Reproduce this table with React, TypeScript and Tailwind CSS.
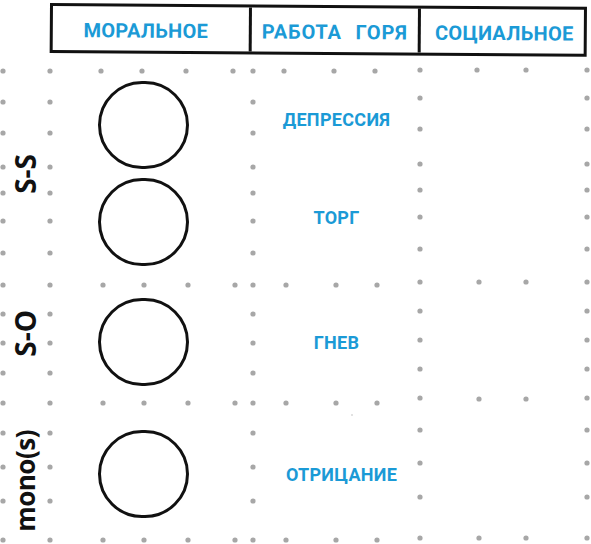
import React from "react";

const leftRows = [71, 102, 133, 167, 193, 221, 253, 285, 314, 343, 373, 403, 433, 467, 501, 540];
const rightRows = [70, 98, 129, 164, 190, 217, 249, 282, 311, 340, 369, 398, 430, 463, 497, 538];

// rows where the dots run all the way across
const fullRows: { y: number; yr: number; xs: number[] }[] = [
  { y: 71, yr: 70, xs: [101, 142, 186, 233, 284, 334, 375, 477, 526] },
  { y: 285, yr: 282, xs: [103, 144, 188, 235, 286, 336, 377, 479, 526] },
  { y: 403, yr: 399, xs: [103, 144, 188, 235, 286, 336, 377, 479, 526] },
  { y: 540, yr: 538, xs: [103, 144, 188, 235, 286, 336, 377, 479, 526] },
];

function Dots() {
  const dots: [number, number][] = [];
  leftRows.forEach((y) => [3, 50, 253].forEach((x) => dots.push([x, y])));
  rightRows.forEach((y) => [420, 587].forEach((x) => dots.push([x, y])));
  fullRows.forEach((r) => r.xs.forEach((x) => dots.push([x, x > 400 ? r.yr : r.y])));

  return (
    <svg className="absolute inset-0 pointer-events-none" width={591} height={544}>
      {dots.map(([x, y], i) => (
        <circle key={i} cx={x} cy={y} r={2.6} fill="#a7a7a7" />
      ))}
      <circle cx={352} cy={415} r={0.8} fill="#bdbdbd" />
    </svg>
  );
}

function Circle({ ml = "ml-[48px]" }: { ml?: string }) {
  return <div className={`${ml} w-[91px] h-[88px] rounded-full border-[3px] border-[#111]`} />;
}

function Label({ children, className = "" }: { children: React.ReactNode; className?: string }) {
  return (
    <div
      className={`w-[50px] flex items-center justify-center font-['Open_Sans',sans-serif] font-bold leading-none text-[#111] ${className}`}
    >
      <span className="[writing-mode:vertical-rl] rotate-180">{children}</span>
    </div>
  );
}

function Stage({ text, textClass = "" }: { text: string; textClass?: string }) {
  return (
    <div className="flex items-center h-[88px]">
      <div className="w-[203px] flex">
        <Circle />
      </div>
      <div
        className={`w-[167px] text-center font-['Roboto',sans-serif] font-bold text-[18px] tracking-[0.3px] text-[#1b9ad6] ${textClass}`}
      >
        {text}
      </div>
    </div>
  );
}

export default function App() {
  return (
    <div className="relative w-[591px] h-[544px] bg-white overflow-hidden">
      <Dots />

      {/* header table */}
      <div className="relative ml-[50px] mt-[3px] w-[537px] h-[50px] flex border-[3px] border-[#111] rotate-[0.4deg] origin-top-left font-['Roboto',sans-serif] font-bold text-[20px] text-[#1b9ad6] tracking-[0.3px]">
        <div className="w-[199px] border-r-[3px] border-[#111] flex items-center justify-center pt-[4px] pr-[10px]">
          МОРАЛЬНОЕ
        </div>
        <div className="w-[169px] border-r-[3px] border-[#111] flex items-center justify-center pt-[4px] tracking-[0.8px] [word-spacing:8px]">
          РАБОТА ГОРЯ
        </div>
        <div className="flex-1 flex items-center justify-center pt-[4px] pl-[4px]">СОЦИАЛЬНОЕ</div>
      </div>

      <div className="relative mt-[28px] flex flex-col">
        {/* S-S */}
        <div className="flex">
          <Label className="text-[28px]">S-S</Label>
          <div className="flex flex-col gap-[9px]">
            <Stage text="ДЕПРЕССИЯ" textClass="mb-[12px]" />
            <Stage text="ТОРГ" textClass="mb-[10px]" />
          </div>
        </div>

        {/* S-O */}
        <div className="flex mt-[32px]">
          <Label className="text-[28px] pb-[18px]">S-O</Label>
          <Stage text="ГНЕВ" />
        </div>

        {/* mono(s) */}
        <div className="flex mt-[44px]">
          <Label className="text-[26px] tracking-[-0.5px]">mono(s)</Label>
          <Stage text="ОТРИЦАНИЕ" textClass="pl-[10px]" />
        </div>
      </div>
    </div>
  );
}
